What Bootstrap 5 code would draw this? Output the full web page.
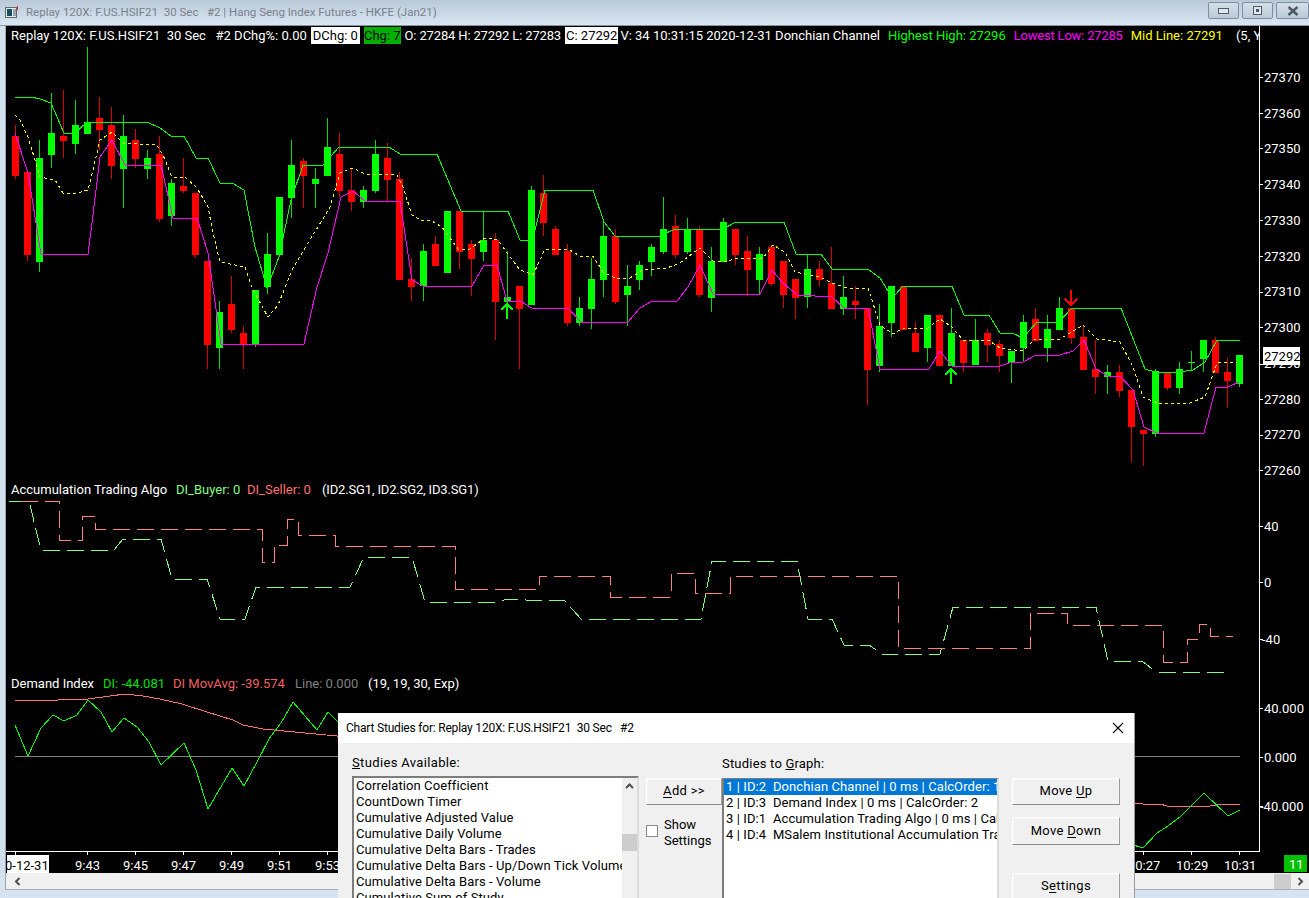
<!DOCTYPE html>
<html lang="en">
<head>
<meta charset="UTF-8">
<title>Replay 120X: F.US.HSIF21 30 Sec #2</title>
<link href="https://cdn.jsdelivr.net/npm/bootstrap@5.3.0/dist/css/bootstrap.min.css" rel="stylesheet">
<style>
html, body { height: 898px; overflow: hidden; background: #d6e4f2; }
body { font-family: "Roboto", "Liberation Sans", sans-serif; font-size: 13px; position: relative; }
.app-window { height: 898px; overflow: hidden; }
.title-strip { height: 26px; flex: none; background: linear-gradient(#b9c9d8, #d9e6f3); border-bottom: 1px solid #8a939c; color: #7a8088; padding-left: 5px; font-size: 11.5px; }
.title-strip svg { margin-right: 8px; }
.win-btns { gap: 3px; margin-top: -4px; }
.win-btns svg { margin-right: 0; }
.win-btn { width: 31px; height: 17px; border: 1px solid #7f8fa3; border-radius: 2px; background: linear-gradient(#d4dfe9, #bccad8); display: flex; align-items: center; justify-content: center; }
.win-btn:last-child { width: 33px; }
.chart-frame { height: 847px; flex: none; padding-left: 5px; background: #d2e0ee; position: relative; }
.chart-box { width: 1304px; height: 847px; background: #000; border-left: 1px solid #9aa5b1; position: relative; overflow: hidden; }
.chart-box svg { display: block; position: absolute; left: 0; top: 0; }
.status-line { position: absolute; left: 0; top: 1px; width: 1253px; height: 17px; overflow: hidden; white-space: pre; color: #fff; padding-left: 5px; align-items: center; }
.status-line span { flex: none; line-height: 17px; }
.boxed-white { background: #fff; color: #000; padding: 0 2px; }
.boxed-tight { background: #fff; color: #000; padding: 0 1px; }
.boxed-green { background: #00b000; color: #000; }
.ohl-txt { letter-spacing: -.15px; }
.vol-txt { margin-left: 2px; }
.hi-green { color: #00ff00; }
.lo-mag { color: #ff00ff; letter-spacing: -.2px; }
.mid-yel { color: #ffff00; }
.param-txt { margin-left: 13px; }
.chart-txt { font-family: "Roboto", "Liberation Sans", sans-serif; font-size: 13px; fill: #fff; }
.box-dark { fill: #000; }
.ids-txt { letter-spacing: -.15px; }
.scroll-strip { height: 17px; flex: none; margin-left: 5px; background: #f0f0f0; border-left: 1px solid #9aa5b1; border-bottom: 1px solid #a8b0b8; }
.scroll-thumb { width: 17px; height: 15px; background: #cdcdcd; margin-right: 6px; }
.arrow-right { margin-right: 5px; }
.studies-dlg { position: absolute; left: 338px; top: 713px; width: 797px; height: 185px; overflow: hidden; background: #f0f0f0; border-right: 1px solid #9a9a9a; color: #000; font-family: "Roboto", "Liberation Sans", sans-serif; font-size: 13px; }
.dlg-head { height: 30px; background: #fff; padding: 0 10px 0 8px; font-size: 12px; letter-spacing: -.2px; }
.dlg-body { padding: 11px 14px 0 14px; }
.col-avail { width: 287px; margin-right: 7px; }
.col-add { width: 76px; margin-top: 24px; }
.col-graph { width: 277px; margin-right: 13px; padding-top: 2px; }
.col-move { width: 108px; margin-top: 24px; }
.list-cap { height: 22px; line-height: 16px; padding-top: 1px; letter-spacing: .35px; }
.col-graph .list-cap { padding-top: 0; letter-spacing: .2px; }
.win-list { background: #fff; border: 2px solid; border-color: #7d7d7d #dcdcdc #dcdcdc #7d7d7d; height: 124px; overflow: hidden; border-radius: 0; }
.col-graph .win-list { border-top-width: 1px; }
.win-list .list-group-item { flex: none; border: 0; padding: 0 0 0 2px; background: transparent; color: #000; font-size: 13px; line-height: 16px; height: 16px; white-space: pre; border-radius: 0; overflow: hidden; letter-spacing: .1px; }
.win-list .list-group-item.active { background: #0078d7; color: #fff; }
.avail-wrap .list-group { flex: 1; min-width: 0; }
.list-bar { width: 15px; flex: none; background: #f0f0f0; position: relative; }
.list-bar svg { display: block; margin: 5px auto 0; }
.list-thumb { position: absolute; left: 0; top: 56px; width: 15px; height: 17px; background: #cdcdcd; }
.dlg-btn { display: block; width: 100%; height: 27px; padding: 0 0 1px; border-radius: 0; background: #f0f0f0; color: #000; font-size: 13px; letter-spacing: .3px; border: 1px solid; border-color: #fff #9b9b9b #8a8a8a #fff; box-shadow: inset 0 0 0 1px #f6f6f6; }
.dlg-btn u { text-underline-offset: 2px; }
.check-row { margin-top: 12px; gap: 6px; line-height: 16px; }
.dlg-check { width: 12px; height: 12px; margin-top: 8px; border: 1px solid #8a8a8a; border-radius: 0 !important; background: #fff; flex: none; }
.gap-move { margin-top: 12px; height: 28px; }
.gap-settings { margin-top: 28px; }
</style>
</head>
<body>
<div class="app-window d-flex flex-column">
  <div class="title-strip d-flex align-items-center justify-content-between">
    <div class="d-flex align-items-center">
      <svg width="13" height="13" viewBox="0 0 13 13"><rect x="0.5" y="1.5" width="11" height="10" fill="#e8e8e8" stroke="#666"/><rect x="2" y="3" width="5" height="7" fill="#12505f"/><rect x="8" y="3" width="3" height="7" fill="#9aa4ac"/><rect x="12" y="0" width="1" height="4" fill="#c33"/></svg>
      <span>Replay 120X: F.US.HSIF21&nbsp; 30 Sec &nbsp; #2 | Hang Seng Index Futures - HKFE (Jan21)</span>
    </div>
    <div class="win-btns d-flex">
      <div class="win-btn"><svg width="11" height="6" viewBox="0 0 11 6"><rect x="0.5" y="0.5" width="10" height="5" fill="#dfe7ef" stroke="#4d5966"/></svg></div>
      <div class="win-btn"><svg width="9" height="9" viewBox="0 0 9 9"><rect x="0.5" y="0.5" width="8" height="8" fill="#dfe7ef" stroke="#4d5966"/><rect x="3" y="3" width="3" height="3" fill="#4d5966"/></svg></div>
      <div class="win-btn"><svg width="12" height="10" viewBox="0 0 12 10"><path d="M1.5 1 L10.5 9 M10.5 1 L1.5 9" stroke="#4d5966" stroke-width="2.4"/></svg></div>
    </div>
  </div>

  <div class="chart-frame">
    <div class="chart-box">
      <svg id="chartSvg" width="1303" height="847" viewBox="6 26 1303 847">
        <g id="chartLayer" shape-rendering="crispEdges"></g>
        <g class="chart-txt">
          <text x="1264" y="82">27370</text>
          <text x="1264" y="118">27360</text>
          <text x="1264" y="153">27350</text>
          <text x="1264" y="189">27340</text>
          <text x="1264" y="225">27330</text>
          <text x="1264" y="261">27320</text>
          <text x="1264" y="296">27310</text>
          <text x="1264" y="332">27300</text>
          <text x="1264" y="368">27290</text>
          <text x="1264" y="404">27280</text>
          <text x="1264" y="439">27270</text>
          <text x="1264" y="475">27260</text>
          <rect x="1263" y="347" width="37" height="18" fill="#fff" shape-rendering="crispEdges"/>
          <text x="1264" y="361" class="box-dark">27292</text>

          <text x="1264" y="531">40</text>
          <text x="1264" y="587">0</text>
          <text x="1262" y="644">-40</text>
          <text x="1264" y="713">40.000</text>
          <text x="1264" y="762">0.000</text>
          <text x="1260" y="811">-40.000</text>

          <text x="11" y="494">Accumulation Trading Algo</text>
          <text x="176" y="494" fill="#80ff80">DI_Buyer: 0</text>
          <text x="247" y="494" fill="#ff7070">DI_Seller: 0</text>
          <text x="322" y="494" class="ids-txt">(ID2.SG1, ID2.SG2, ID3.SG1)</text>
          <text x="11" y="688">Demand Index</text>
          <text x="103" y="688" fill="#00e000">DI: -44.081</text>
          <text x="173" y="688" fill="#f06060">DI MovAvg: -39.574</text>
          <text x="295" y="688" fill="#808080">Line: 0.000</text>
          <text x="368" y="688">(19, 19, 30, Exp)</text>

          <rect x="7" y="855" width="42" height="18" fill="#fff" shape-rendering="crispEdges"/>
          <text x="5" y="870" class="box-dark">0-12-31</text>
          <text x="75" y="870">9:43</text>
          <text x="123" y="870">9:45</text>
          <text x="171" y="870">9:47</text>
          <text x="219" y="870">9:49</text>
          <text x="267" y="870">9:51</text>
          <text x="315" y="870">9:53</text>
          <text x="1128" y="870">10:27</text>
          <text x="1176" y="870">10:29</text>
          <text x="1224" y="870">10:31</text>
          <rect x="1284" y="855" width="23" height="17" fill="#00c000" shape-rendering="crispEdges"/>
          <text x="1289" y="869">11</text>
        </g>
      </svg>
      <div class="status-line d-flex">
        <span class="me-1">Replay 120X: F.US.HSIF21  30 Sec   #2 DChg%: 0.00</span>
        <span class="boxed-white">DChg: 0</span>
        <span class="boxed-green ms-1">Chg: 7</span>
        <span class="ohl-txt ms-1">O: 27284 H: 27292 L: 27283</span>
        <span class="boxed-tight ms-1">C: 27292</span>
        <span class="vol-txt">V: 34 10:31:15 2020-12-31 Donchian Channel</span>
        <span class="hi-green ms-2">Highest High: 27296</span>
        <span class="lo-mag ms-2">Lowest Low: 27285</span>
        <span class="mid-yel ms-2">Mid Line: 27291</span>
        <span class="param-txt">(5, Y</span>
      </div>
    </div>
  </div>

  <div class="scroll-strip d-flex align-items-center justify-content-between">
    <svg class="ms-2" width="7" height="9" viewBox="0 0 7 9"><path d="M5.5 1 L2 4.5 L5.5 8" fill="none" stroke="#505050" stroke-width="2"/></svg>
    <div class="d-flex align-items-center">
      <div class="scroll-thumb"></div>
      <svg class="arrow-right" width="7" height="9" viewBox="0 0 7 9"><path d="M1.5 1 L5 4.5 L1.5 8" fill="none" stroke="#505050" stroke-width="2"/></svg>
    </div>
  </div>
</div>

<!-- study dialog sits over the chart -->
<div class="studies-dlg">
  <div class="dlg-head d-flex align-items-center justify-content-between">
    <span>Chart Studies for: Replay 120X: F.US.HSIF21&nbsp; 30 Sec &nbsp; #2</span>
    <svg width="12" height="12" viewBox="0 0 12 12"><path d="M1 1 L11 11 M11 1 L1 11" stroke="#000" stroke-width="1.1"/></svg>
  </div>
  <div class="dlg-body d-flex">
    <div class="col-avail">
      <div class="list-cap"><u>S</u>tudies Available:</div>
      <div class="win-list avail-wrap d-flex">
        <ul class="list-group">
          <li class="list-group-item">Correlation Coefficient</li>
          <li class="list-group-item">CountDown Timer</li>
          <li class="list-group-item">Cumulative Adjusted Value</li>
          <li class="list-group-item">Cumulative Daily Volume</li>
          <li class="list-group-item">Cumulative Delta Bars - Trades</li>
          <li class="list-group-item">Cumulative Delta Bars - Up/Down Tick Volume</li>
          <li class="list-group-item">Cumulative Delta Bars - Volume</li>
          <li class="list-group-item">Cumulative Sum of Study</li>
        </ul>
        <div class="list-bar">
          <svg width="9" height="6" viewBox="0 0 9 6"><path d="M1 5 L4.5 1.5 L8 5" fill="none" stroke="#505050" stroke-width="2"/></svg>
          <div class="list-thumb"></div>
        </div>
      </div>
    </div>
    <div class="col-add">
      <button class="btn dlg-btn" type="button"><u>A</u>dd &gt;&gt;</button>
      <div class="check-row d-flex">
        <input class="form-check-input dlg-check" type="checkbox">
        <span>Show<br>Settings</span>
      </div>
    </div>
    <div class="col-graph">
      <div class="list-cap">Studies to <u>G</u>raph:</div>
      <ul class="list-group win-list">
        <li class="list-group-item active">1 | ID:2  Donchian Channel | 0 ms | CalcOrder: 1</li>
        <li class="list-group-item">2 | ID:3  Demand Index | 0 ms | CalcOrder: 2</li>
        <li class="list-group-item">3 | ID:1  Accumulation Trading Algo | 0 ms | CalcOrder: 3</li>
        <li class="list-group-item">4 | ID:4  MSalem Institutional Accumulation Trading</li>
      </ul>
    </div>
    <div class="col-move">
      <button class="btn dlg-btn" type="button">Move <u>U</u>p</button>
      <button class="btn dlg-btn gap-move" type="button">Move <u>D</u>own</button>
      <button class="btn dlg-btn gap-settings" type="button">S<u>e</u>ttings</button>
    </div>
  </div>
</div>

<script>
// [colour, wickTop, bodyTop, bodyBottom, wickBottom] in page pixels, one bar every 12px
const bars = [
  ['r',125,136,176,179],['r',172,172,255,261],['g',140,158,262,272],['g',93,133,155,168],['r',90,136,141,158],
  ['g',100,125,144,154],['g',47,122,134,134],['r',97,118,130,150],['r',107,125,166,179],['g',115,136,169,208],
  ['r',129,140,159,168],['g',150,158,169,179],['r',136,154,219,222],['g',179,183,216,226],['r',158,186,191,193],
  ['r',193,193,255,258],['r',261,261,345,369],['g',301,312,348,369],['r',276,304,330,333],['r',326,333,344,369],
  ['g',290,290,344,347],['g',233,254,287,294],['g',197,197,255,257],['g',140,165,198,218],['r',158,161,176,208],
  ['g',168,179,184,208],['g',118,147,176,176],['r',133,154,191,197],['r',168,190,202,211],['g',186,190,202,208],
  ['g',140,154,191,193],['r',143,158,180,202],['r',172,179,280,280],['r',258,279,287,301],['g',244,251,286,301],
  ['r',236,244,266,266],['g',211,211,273,273],['r',211,211,252,269],['r',240,244,259,296],['g',211,240,252,261],
  ['r',233,240,302,340],['g',251,297,302,305],['r',286,286,309,369],['g',186,190,305,305],['r',175,193,223,236],
  ['r',226,229,255,255],['r',244,251,323,326],['g',297,308,323,326],['g',258,279,309,329],['g',222,236,280,297],
  ['r',229,236,302,304],['g',265,286,295,326],['g',261,265,280,290],['g',244,247,262,276],['g',197,229,252,254],
  ['r',215,226,255,258],['g',218,229,252,254],['r',226,230,295,297],['g',247,261,298,312],['g',218,222,262,262],
  ['r',229,229,255,265],['r',236,251,270,296],['g',247,254,280,295],['r',245,247,284,286],['r',261,261,295,308],
  ['r',279,279,298,319],['g',255,269,297,308],['r',261,269,280,286],['r',247,283,309,309],['g',276,297,309,315],
  ['r',286,301,305,319],['r',308,308,370,405],['g',304,326,366,372],['g',286,286,323,337],['r',286,286,330,330],
  ['r',322,333,352,352],['g',315,315,348,362],['r',315,315,366,366],['g',308,333,366,366],['r',340,340,363,372],
  ['g',319,340,365,365],['r',329,333,345,362],['r',340,344,356,372],['g',351,351,363,383],['g',315,322,348,362],
  ['r',308,319,341,341],['g',315,329,348,362],['g',297,308,330,330],['r',308,308,338,344],['r',325,337,370,370],
  ['r',340,369,377,394],['g',365,372,377,394],['r',365,372,391,397],['r',390,390,427,462],['r',430,430,434,466],
  ['g',369,371,434,437],['r',373,373,388,390],['g',362,369,388,394],['g',351,362,363,370],['g',340,340,359,372],
  ['r',337,340,373,373],['r',358,372,381,408],['g',355,355,384,387]
];

const highLine = "15,97 31,97 40,99 51,103 64,133 75,133 87,122 147,122 160,128 171,136 184,136 196,158 208,158 220,183 232,183 244,190 255,247 267,288 279,257 291,200 303,165 323,165 339,147 389,147 400,154 437,154 461,211 508,211 520,240 528,240 535,230 545,190 593,190 604,222 615,236 660,236 675,229 723,229 736,222 784,222 796,254 821,254 832,269 868,269 880,278 888,291 895,295 903,286 952,286 964,315 989,315 1000,333 1012,333 1023,338 1037,322 1059,322 1072,308 1121,308 1145,369 1155,372 1180,372 1193,370 1205,362 1217,340 1240,340";
const lowLine = "15,133 28,173 41,254 88,254 92,223 100,157 112,140 125,165 161,165 173,218 197,218 208,253 221,344 304,344 317,287 328,253 341,197 353,191 365,201 400,201 412,280 423,286 472,286 484,265 497,265 507,301 520,301 532,308 568,308 581,322 628,322 640,308 652,301 677,301 688,287 700,265 713,294 760,294 772,270 783,283 797,295 832,297 844,308 868,308 880,369 929,369 940,351 952,366 1000,366 1012,362 1023,362 1036,355 1060,355 1073,351 1084,340 1096,369 1108,376 1120,376 1133,390 1144,427 1157,433 1204,433 1216,387 1228,387 1239,382";
const midLine = "15,115 20,120 28,137 35,160 40,177 55,180 63,193 77,193 88,190 93,170 100,140 112,132 123,143 157,145 163,155 172,177 185,177 197,188 208,207 213,233 220,262 245,267 252,288 268,317 278,305 293,268 313,235 330,207 340,173 353,168 365,174 397,175 403,187 412,215 420,220 430,220 442,227 458,249 470,249 485,238 498,240 510,257 520,270 533,275 545,249 568,249 580,256 593,256 603,272 617,279 630,278 643,270 667,268 680,263 700,248 713,261 727,261 738,258 763,258 773,245 785,252 795,272 820,277 832,283 847,288 868,288 880,325 893,334 903,328 928,328 940,319 952,327 963,340 988,340 1000,348 1023,351 1035,339 1060,339 1083,325 1097,339 1120,342 1133,367 1143,397 1157,403 1190,403 1205,397 1217,363 1237,362";
const algoGreen = "9,501 29,501 41,550 114,550 123,539 161,539 172,579 207,579 220,619 245,619 256,587 350,587 364,557 412,557 425,602 499,602 507,599 526,600 564,600 581,619 701,619 712,561 797,561 808,619 832,619 844,645 869,645 882,654 940,654 953,607 1096,607 1108,661 1142,661 1156,672 1228,672";
const algoRed = "21,501 59,501 59,540 82,540 82,516 95,516 95,529 262,529 262,562 274,562 274,545 287,545 287,519 298,519 298,535 335,535 335,546 455,546 455,589 539,589 539,576 610,576 610,597 671,597 671,573 695,573 695,593 730,593 730,576 898,576 898,648 1030,648 1030,613 1067,613 1067,625 1163,625 1163,662 1187,662 1187,639 1199,639 1199,624 1210,624 1210,636 1233,636";
const demandGreen = "15,725 28,756 41,728 53,715 64,721 77,715 88,700 101,712 112,732 124,718 137,727 149,742 161,765 184,743 196,770 208,809 232,768 244,786 257,762 269,739 281,723 293,702 317,730 328,712 338,722 1130,844 1143,848 1157,833 1168,826 1180,817 1204,793 1228,816 1240,810";
const demandRed = "15,700 58,700 88,699 125,694 143,696 160,699 182,704 207,712 233,720 243,725 263,729 337,736 1134,803 1143,804 1160,804 1167,806 1210,806 1222,804 1240,804";

let out = "";
const rect = (x, y, w, h, c) => `<rect x="${x}" y="${y}" width="${w}" height="${h}" fill="${c}"/>`;
const poly = (pts, c, w, dash) => `<polyline points="${pts}" fill="none" stroke="${c}" stroke-width="${w}"${dash ? ` stroke-dasharray="${dash}"` : ""}/>`;

// candles
bars.forEach((b, i) => {
  const up = b[0] === "g";
  out += rect(15 + 12 * i, b[1], 1, b[4] - b[1], up ? "#00dc00" : "#d80000");
  out += rect(12 + 12 * i, b[2], 7, b[3] - b[2], up ? "#00ff00" : "#ff0000");
});

// Donchian lines over the candles
out += poly(highLine, "#00ff00", 1);
out += poly(midLine, "#ffff00", 1, "3 3");
out += poly(lowLine, "#ff00ff", 1);

// buy / sell arrows
[[507, 304], [951, 369]].forEach(a => {
  out += rect(a[0] - 1, a[1] + 1, 2, 14, "#00ff00");
  out += `<path d="M${a[0] - 6} ${a[1] + 6} L${a[0]} ${a[1]} L${a[0] + 6} ${a[1] + 6}" fill="none" stroke="#00ff00" stroke-width="2"/>`;
});
out += rect(1070, 290, 2, 14, "#ff0000");
out += `<path d="M1065 299 L1071 305 L1077 299" fill="none" stroke="#ff0000" stroke-width="2"/>`;

// lower panels
out += poly(algoGreen, "#80ff80", 1, "17 7");
out += poly(algoRed, "#ff8080", 1, "17 7");
out += rect(15, 756, 1225, 1, "#808080");
out += poly(demandRed, "#ff7070", 1);
out += poly(demandGreen, "#00ff00", 1);

// axes
out += rect(1259, 26, 1, 826, "#fff");
out += rect(6, 851, 1254, 1, "#fff");
[77, 113, 148, 184, 220, 256, 292, 327, 364, 399, 435, 470, 526, 582, 639, 708, 757, 806].forEach(y => {
  out += rect(1260, y, 3, 1, "#fff");
});
[15, 87, 135, 183, 231, 279, 327, 1143, 1191, 1239].forEach(x => {
  out += rect(x, 852, 1, 3, "#fff");
});
document.getElementById("chartLayer").innerHTML = out;
</script>
<script src="https://cdn.jsdelivr.net/npm/bootstrap@5.3.0/dist/js/bootstrap.bundle.min.js"></script>
</body>
</html>
